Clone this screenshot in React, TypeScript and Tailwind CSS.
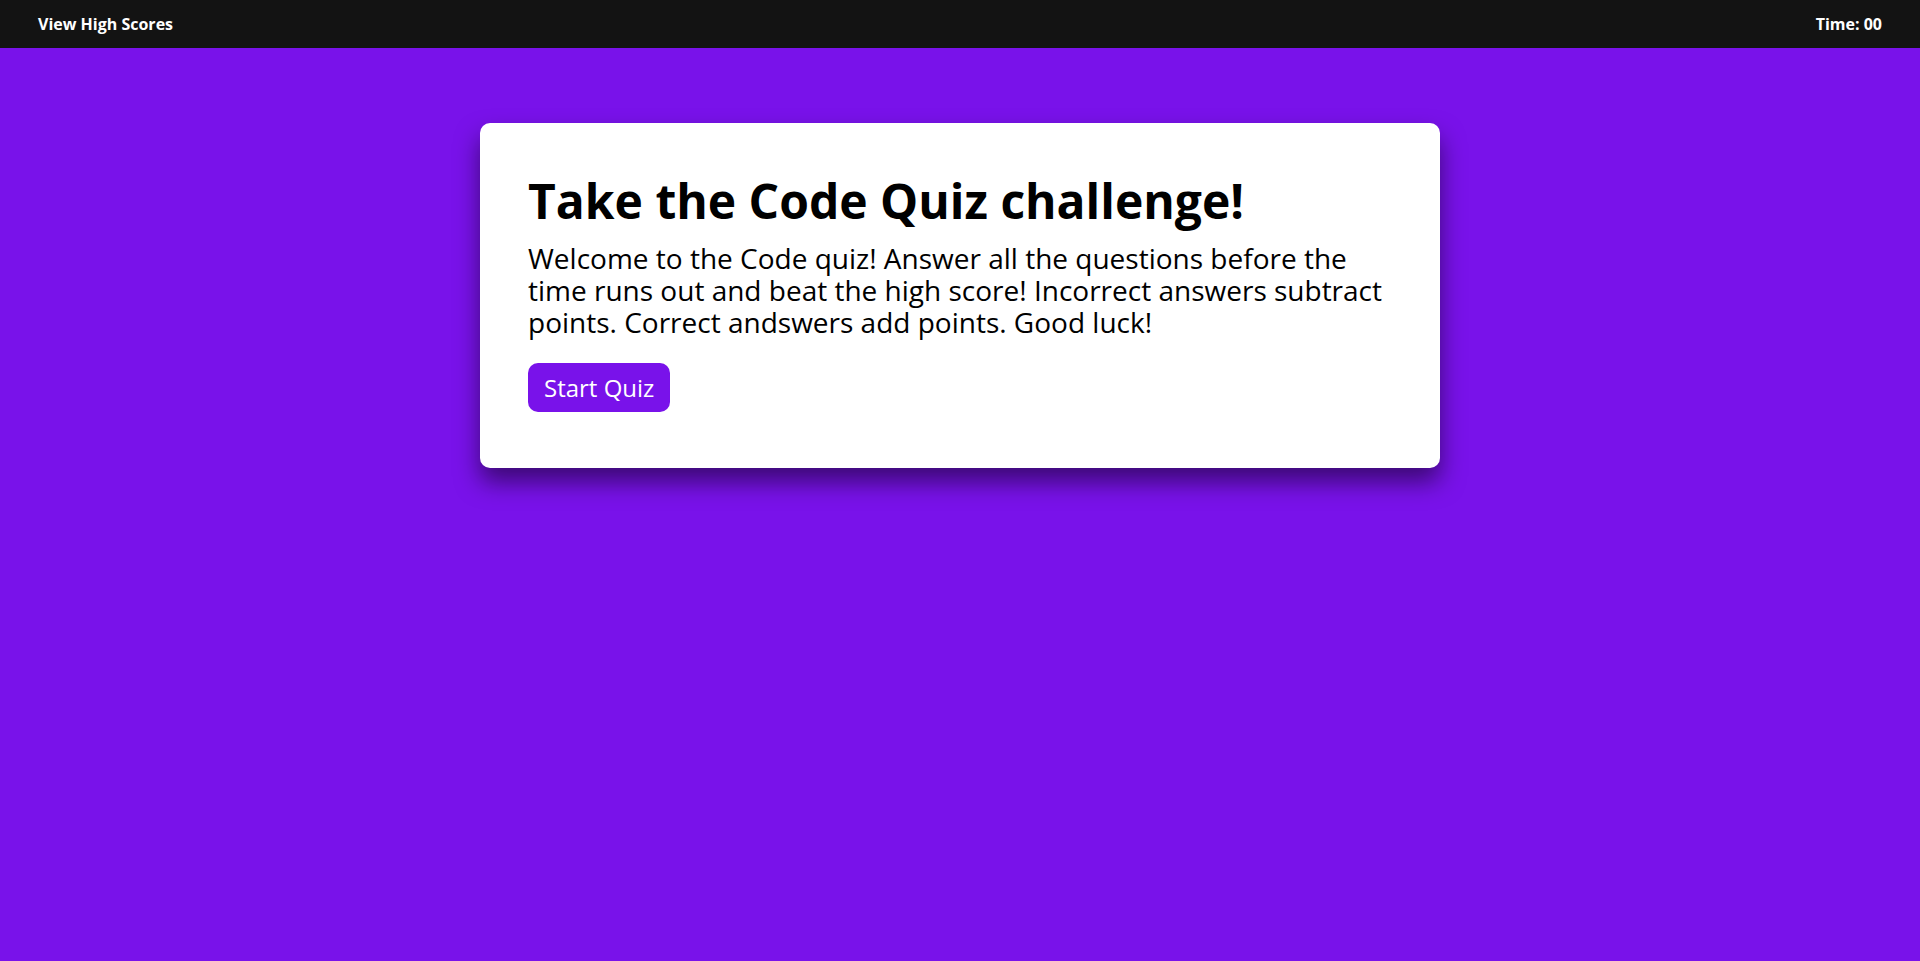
import React from "react";

export default function App() {
  return (
    <div className="min-h-[961px] w-full bg-[#7912ea]" style={{ fontFamily: '"Open Sans", "Noto Sans", sans-serif' }}>
      <header className="flex h-[48px] items-center justify-between bg-[#131313] px-[38px] text-[16px] font-bold text-white">
        <span>View High Scores</span>
        <span>Time: 00</span>
      </header>
      <main className="flex justify-center pt-[75px]">
        <div className="w-[960px] rounded-[10px] bg-white px-[48px] pt-[45px] pb-[56px] shadow-[0_14px_24px_rgba(0,0,0,0.5)]">
          <h1 className="text-[48px] font-bold leading-[1.362] text-black">Take the Code Quiz challenge!</h1>
          <p className="mt-[9px] text-[28px] leading-[32px] text-black">
            Welcome to the Code quiz! Answer all the questions before the time runs out and beat the high score! Incorrect answers subtract points. Correct andswers add points. Good luck!
          </p>
          <button className="mt-[25px] rounded-[10px] bg-[#7912ea] px-[16px] py-[8px] text-[24px] leading-[33px] text-white">
            Start Quiz
          </button>
        </div>
      </main>
    </div>
  );
}
